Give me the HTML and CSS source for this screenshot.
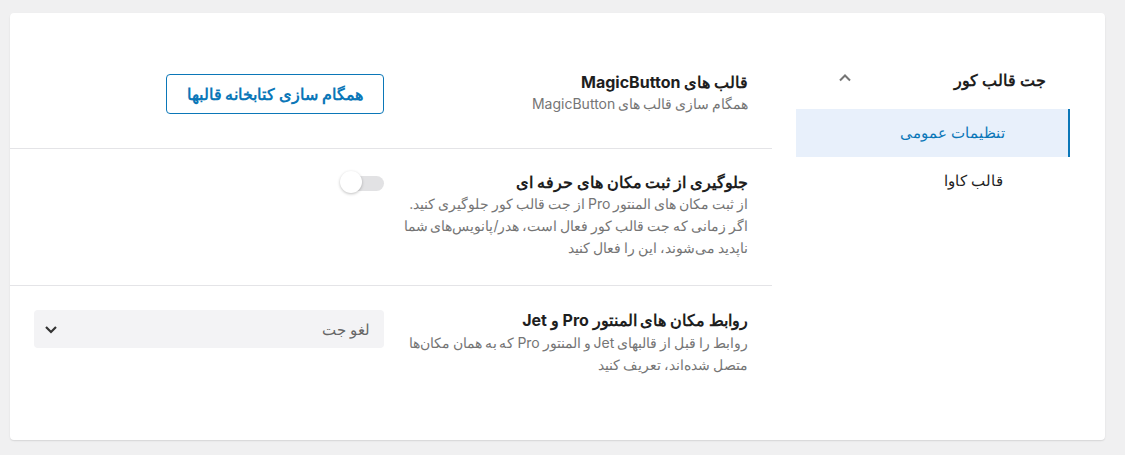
FILE: index.html
```html
<!DOCTYPE html>
<html lang="fa" dir="rtl">
<head>
<meta charset="utf-8">
<title>تنظیمات</title>
<link rel="stylesheet" href="styles.css">
</head>
<body>
<div class="card">
  <aside class="sidebar">
    <div class="side-head">
      <span class="side-title">جت قالب کور</span>
      <svg class="chev-up" width="14" height="14" viewBox="0 0 14 14"><polyline points="2,9.5 7,4.5 12,9.5" fill="none" stroke="#757575" stroke-width="2"/></svg>
    </div>
    <ul class="side-list">
      <li class="side-item active">تنظیمات عمومی</li>
      <li class="side-item">قالب کاوا</li>
    </ul>
  </aside>
  <main class="content">
    <section class="row first">
      <div class="info">
        <h3 class="title">قالب های MagicButton</h3>
        <p class="desc">همگام سازی قالب های MagicButton</p>
      </div>
      <div class="control">
        <button class="btn">همگام سازی کتابخانه قالبها</button>
      </div>
    </section>
    <section class="row">
      <div class="info">
        <h3 class="title">جلوگیری از ثبت مکان های حرفه ای</h3>
        <p class="desc">از ثبت مکان های المنتور Pro از جت قالب کور جلوگیری کنید. اگر زمانی که جت قالب کور فعال است، هدر/پانویس‌های شما ناپدید می‌شوند، این را فعال کنید</p>
      </div>
      <div class="control">
        <div class="toggle"><span class="track"></span><span class="knob"></span></div>
      </div>
    </section>
    <section class="row last">
      <div class="info">
        <h3 class="title">روابط مکان های المنتور Pro و Jet</h3>
        <p class="desc">روابط را قبل از قالبهای Jet و المنتور Pro که به همان مکان‌ها متصل شده‌اند، تعریف کنید</p>
      </div>
      <div class="control">
        <div class="select">
          <span class="select-val">لغو جت</span>
          <svg width="14" height="14" viewBox="0 0 14 14"><polyline points="2,5 7,10 12,5" fill="none" stroke="#333" stroke-width="2.2"/></svg>
        </div>
      </div>
    </section>
  </main>
</div>
</body>
</html>
```

FILE: styles.css
```css
html, body {
  margin: 0;
  padding: 0;
}
body {
  background: #f0f0f1;
  font-family: Inter, sans-serif;
  color: #1e1e1e;
  padding: 13px 20px 15px 10px;
  box-sizing: border-box;
  height: 455px;
}
.card {
  background: #fff;
  border-radius: 4px;
  box-shadow: 0 1px 2px rgba(0,0,0,0.08), 0 1px 1px rgba(0,0,0,0.04);
  height: 427px;
  box-sizing: border-box;
  display: flex;
  direction: rtl;
  padding: 36px 35px 0 0;
  gap: 24px;
}
.sidebar {
  width: 274px;
  flex: none;
}
.side-head {
  display: flex;
  justify-content: space-between;
  align-items: center;
  height: 48px;
  margin-top: 7px;
  padding: 0 24px 0 42px;
}
.side-title {
  font-size: 16px;
  font-weight: 700;
  color: #1e1e1e;
}
.chev-up {
  display: block;
  margin-top: -4px;
}
.side-list {
  list-style: none;
  margin: 5px 0 0;
  padding: 0;
}
.side-item {
  height: 48px;
  line-height: 48px;
  padding-right: 65px;
  font-size: 15px;
  color: #1e1e1e;
  border-right: 2px solid transparent;
}
.side-item.active {
  background: #e8f0fb;
  color: #0b77b8;
  border-right-color: #0b77b8;
  padding-right: 63px;
}
.content {
  width: 762px;
  flex: none;
}
.row {
  display: flex;
  gap: 16px;
  padding: 22px 24px 26px;
  border-bottom: 1px solid #e4e4e7;
}
.row.first {
  padding-bottom: 33px;
}
.row.last {
  border-bottom: none;
  padding-top: 23px;
}
.info {
  width: 348px;
  flex: none;
}
.control {
  width: 350px;
  flex: none;
  display: flex;
  align-items: flex-start;
}
.title {
  margin: 0;
  font-size: 16px;
  line-height: 22px;
  font-weight: 700;
  color: #1e1e1e;
}
.desc {
  margin: 0;
  font-size: 14px;
  line-height: 22px;
  word-spacing: -1px;
  color: #757575;
}
.last .desc {
  margin-top: 1px;
}
.btn {
  font-family: inherit;
  height: 40px;
  margin-top: 3px;
  padding: 0 20px;
  border: 1px solid #0b77b8;
  border-radius: 4px;
  background: #fff;
  color: #0b77b8;
  font-size: 16px;
  font-weight: 700;
  cursor: pointer;
}
.toggle {
  position: relative;
  width: 44px;
  height: 24px;
}
.track {
  position: absolute;
  right: 0;
  top: 5px;
  width: 38px;
  height: 15px;
  border-radius: 8px;
  background: #e2e2e4;
}
.knob {
  position: absolute;
  left: 0;
  top: 0;
  width: 22px;
  height: 22px;
  border-radius: 50%;
  background: #fff;
  box-shadow: 0 1px 3px rgba(0,0,0,0.25);
}
.select {
  width: 100%;
  height: 38px;
  margin-top: 1px;
  box-sizing: border-box;
  background: #f3f3f5;
  border-radius: 4px;
  display: flex;
  align-items: center;
  justify-content: space-between;
  padding: 0 14px 0 10px;
}
.select-val {
  font-size: 15px;
  color: #666;
}
.select svg {
  display: block;
}
```
